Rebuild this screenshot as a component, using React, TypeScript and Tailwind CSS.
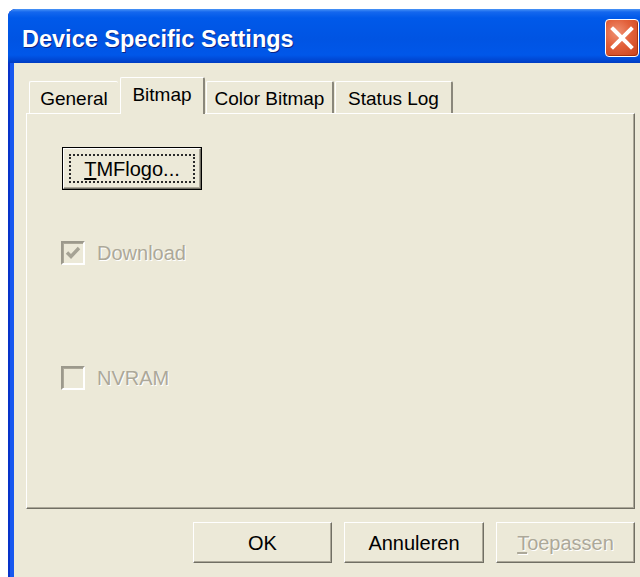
import React from "react";

const raised =
  "border-t border-l border-t-white border-l-white border-r border-b border-r-[#716F64] border-b-[#716F64] shadow-[inset_-1px_-1px_0_#ACA899]";

function Tab({ label, width, selected }: { label: string; width: string; selected?: boolean }) {
  if (selected) {
    return (
      <div
        className={`${width} relative z-10 h-[37px] -mb-[1px] bg-[#ECE9D8] rounded-t-[2px] border-t border-l border-t-white border-l-white border-r-2 border-r-[#8A877B] pt-[7px] text-center text-[19px] leading-[19px] text-black`}
      >
        {label}
      </div>
    );
  }
  return (
    <div
      className={`${width} h-[32px] bg-[#ECE9D8] rounded-t-[2px] border-t border-l border-t-white border-l-white border-r-2 border-r-[#8A877B] pt-[7px] text-center text-[19px] leading-[19px] text-black`}
    >
      {label}
    </div>
  );
}

function DisabledCheck({ checked, label }: { checked?: boolean; label: string }) {
  return (
    <div className="flex items-center gap-[12px] -ml-[1px]">
      <div className="relative w-[24px] h-[24px] border-2 border-t-[#9C998C] border-l-[#9C998C] border-r-white border-b-white shadow-[inset_1px_1px_0_#ACA899] bg-[#ECE9D8]">
        {checked && (
          <svg className="absolute left-[2px] top-[2px]" width="16" height="16" viewBox="0 0 16 16">
            <polyline points="2,7.5 6,11.5 14,3" fill="none" stroke="#A6A395" strokeWidth="3.4" />
          </svg>
        )}
      </div>
      <span className="text-[20px] leading-[24px] text-[#ACA899] [text-shadow:1px_1px_0_#ffffff]">{label}</span>
    </div>
  );
}

export default function App() {
  return (
    <div className="w-[640px] h-[577px] overflow-hidden bg-white pt-[9px] pl-[8px] font-['Liberation_Sans',Arial,sans-serif]">
      <div className="w-[640px] h-[600px] flex flex-col rounded-t-[8px] overflow-hidden bg-[#1758EF] shadow-[inset_2px_0_0_#0733C9]">
        {/* caption bar */}
        <div className="h-[54px] shrink-0 flex items-start bg-[linear-gradient(180deg,#4A94F6_0px,#1467EE_3px,#0059E9_9px,#0054E3_30px,#0057E9_46px,#0047D3_51px,#003CC2_54px)]">
          <div className="pl-[14px] pt-[18px] text-[23.5px] leading-[24px] font-bold text-white [text-shadow:1px_1px_0_#0A2487]">
            Device Specific Settings
          </div>
          <div className="ml-auto mr-[9px] mt-[10px] w-[34px] h-[38px] rounded-[4px] border border-white bg-[radial-gradient(circle_at_35%_35%,#F09274_0%,#E2603A_45%,#C9421C_100%)] shadow-[inset_-1px_-1px_0_#A8310F]">
            <svg width="32" height="36" viewBox="0 0 32 36">
              <line x1="7" y1="9" x2="25" y2="27" stroke="white" strokeWidth="4" strokeLinecap="square" />
              <line x1="25" y1="9" x2="7" y2="27" stroke="white" strokeWidth="4" strokeLinecap="square" />
            </svg>
          </div>
        </div>

        {/* client area */}
        <div className="flex-1 ml-[6px] bg-[#ECE9D8] flex flex-col">
          {/* tab strip */}
          <div className="mt-[14px] h-[36px] pl-[15px] flex items-end">
            <div className="w-[89px] h-[32px] bg-[#ECE9D8] rounded-t-[2px] border-t border-l border-t-white border-l-white pt-[7px] text-center text-[19px] leading-[19px] text-black">
              General
            </div>
            <div className="ml-[2px] flex items-end">
              <Tab label="Bitmap" width="w-[85px]" selected />
            </div>
            <div className="ml-[1px] flex items-end">
              <Tab label="Color Bitmap" width="w-[128px]" />
            </div>
            <div className="ml-[1px] flex items-end">
              <Tab label="Status Log" width="w-[118px]" />
            </div>
          </div>

          {/* tab page */}
          <div className="ml-[12px] w-[609px] h-[396px] border-t border-l border-t-white border-l-white border-r border-b border-r-[#716F64] border-b-[#716F64] shadow-[inset_-1px_-1px_0_#ACA899] pl-[35px] pt-[33px] flex flex-col items-start">
            <div className="w-[140px] h-[43px] border border-black bg-[#ECE9D8]">
              <div className={`h-full ${raised} p-[5px]`}>
                <div className="h-full border-2 border-dotted border-[#2a2a2a] flex items-center justify-center text-[20px] leading-[20px] text-black">
                  <span>
                    <span className="underline underline-offset-[2px]">T</span>MFlogo...
                  </span>
                </div>
              </div>
            </div>

            <div className="mt-[51px]">
              <DisabledCheck checked label="Download" />
            </div>
            <div className="mt-[101px]">
              <DisabledCheck label="NVRAM" />
            </div>
          </div>

          {/* dialog buttons */}
          <div className="mt-[13px] ml-[179px] flex gap-[12px]">
            <div className={`w-[139px] h-[41px] ${raised} bg-[#ECE9D8] flex items-center justify-center text-[20px] text-black`}>
              OK
            </div>
            <div className={`w-[140px] h-[41px] ${raised} bg-[#ECE9D8] flex items-center justify-center text-[20px] text-black`}>
              Annuleren
            </div>
            <div className={`w-[139px] h-[41px] ${raised} bg-[#ECE9D8] flex items-center justify-center text-[20px] text-[#ACA899] [text-shadow:1px_1px_0_#ffffff]`}>
              <span>
                <span className="underline underline-offset-[2px]">T</span>oepassen
              </span>
            </div>
          </div>
        </div>
      </div>
    </div>
  );
}
